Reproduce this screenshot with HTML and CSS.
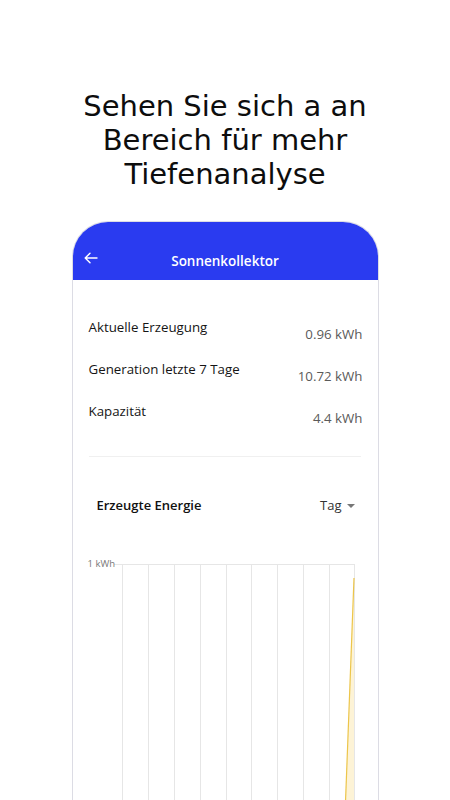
FILE: index.html
```html
<!DOCTYPE html>
<html>
<head>
    <title>Sonnenkollektor</title>
    <meta name="viewport" content="width=device-width, initial-scale=1.0">
    <link rel="stylesheet" href="styles.css">
</head>
<body>
    <h1 class="headline">Sehen Sie sich a an<br>Bereich für mehr<br>Tiefenanalyse</h1>

    <div class="phone">
        <header class="app-bar">
            <svg class="back" width="14" height="12" viewBox="0 0 14 12">
                <path d="M13 6H1.5M6 1.2L1.2 6 6 10.8" fill="none" stroke="#fff" stroke-width="1.4" stroke-linecap="round" stroke-linejoin="round"/>
            </svg>
            <span class="title">Sonnenkollektor</span>
        </header>

        <!-- kennzahlen -->
        <div class="stats">
            <div class="row"><span class="label">Aktuelle Erzeugung</span><span class="value">0.96 kWh</span></div>
            <div class="row"><span class="label">Generation letzte 7 Tage</span><span class="value">10.72 kWh</span></div>
            <div class="row"><span class="label">Kapazität</span><span class="value">4.4 kWh</span></div>
        </div>

        <div class="divider"></div>

        <div class="chart-head">
            <span class="chart-title">Erzeugte Energie</span>
            <span class="range">Tag <span class="caret"></span></span>
        </div>

        <!-- diagramm -->
        <div class="chart">
            <span class="axis-label">1 kWh</span>
            <svg class="grid" width="305" height="250" viewBox="0 0 305 250">
                <g stroke="#e6e6e6" stroke-width="1">
                    <line x1="41" y1="12.5" x2="281" y2="12.5"/>
                    <line x1="49.5" y1="12" x2="49.5" y2="250"/>
                    <line x1="75.5" y1="12" x2="75.5" y2="250"/>
                    <line x1="101.5" y1="12" x2="101.5" y2="250"/>
                    <line x1="127.5" y1="12" x2="127.5" y2="250"/>
                    <line x1="153.5" y1="12" x2="153.5" y2="250"/>
                    <line x1="178.5" y1="12" x2="178.5" y2="250"/>
                    <line x1="204.5" y1="12" x2="204.5" y2="250"/>
                    <line x1="230.5" y1="12" x2="230.5" y2="250"/>
                    <line x1="256.5" y1="12" x2="256.5" y2="250"/>
                    <line x1="281.5" y1="12" x2="281.5" y2="250"/>
                </g>
                <path d="M281 26 L272.5 250 L281 250 Z" fill="#fdf3d6"/>
                <path d="M281 26 L272.5 250" fill="none" stroke="#ecc54a" stroke-width="1.2"/>
            </svg>
        </div>
    </div>
</body>
</html>
```

FILE: styles.css
```css
html, body { margin: 0; height: 100%; overflow: hidden; background: #fff; }
body { font-family: "Open Sans", Arial, sans-serif; color: #111; }

.headline { margin: 0; padding-top: 89px; height: 132px; font-family: "DejaVu Sans", "Open Sans", sans-serif; font-size: 29px; line-height: 34px; font-weight: 400; text-align: center; color: #0d0d0d; }

.phone { width: 305px; height: 640px; margin: 0 auto; border: 1px solid #dcdce4; border-bottom: none; border-radius: 36px 36px 0 0; overflow: hidden; background: #fff; }

.app-bar { position: relative; height: 58px; background: #2a3bf0; display: flex; align-items: center; justify-content: center; padding-top: 2px; box-sizing: border-box; }
.app-bar .back { position: absolute; left: 11px; top: 30px; }
.app-bar .title { color: #fff; font-size: 13.5px; font-weight: 600; padding-top: 18px; }

.stats { padding: 38px 15px 0 16px; display: flex; flex-direction: column; gap: 17px; }
.row { display: flex; justify-content: space-between; align-items: flex-start; font-size: 13.3px; line-height: 18px; }
.row .label { color: #151515; }
.row .value { color: #5a5a5a; padding-top: 7px; }

.divider { height: 1px; background: #f0f0f0; margin: 29px 17px 0 16px; }

.chart-head { display: flex; justify-content: space-between; align-items: center; padding: 39px 23px 0 24px; font-size: 13px; line-height: 18px; }
.chart-title { font-weight: 600; color: #111; }
.range { color: #333; display: flex; align-items: center; gap: 5px; }
.caret { width: 0; height: 0; border-left: 4px solid transparent; border-right: 4px solid transparent; border-top: 4px solid #777; margin-top: 1px; }

.chart { position: relative; margin-top: 38px; }
.axis-label { position: absolute; left: 15px; top: 5px; font-size: 9.5px; color: #777; }
.grid { display: block; }
```
